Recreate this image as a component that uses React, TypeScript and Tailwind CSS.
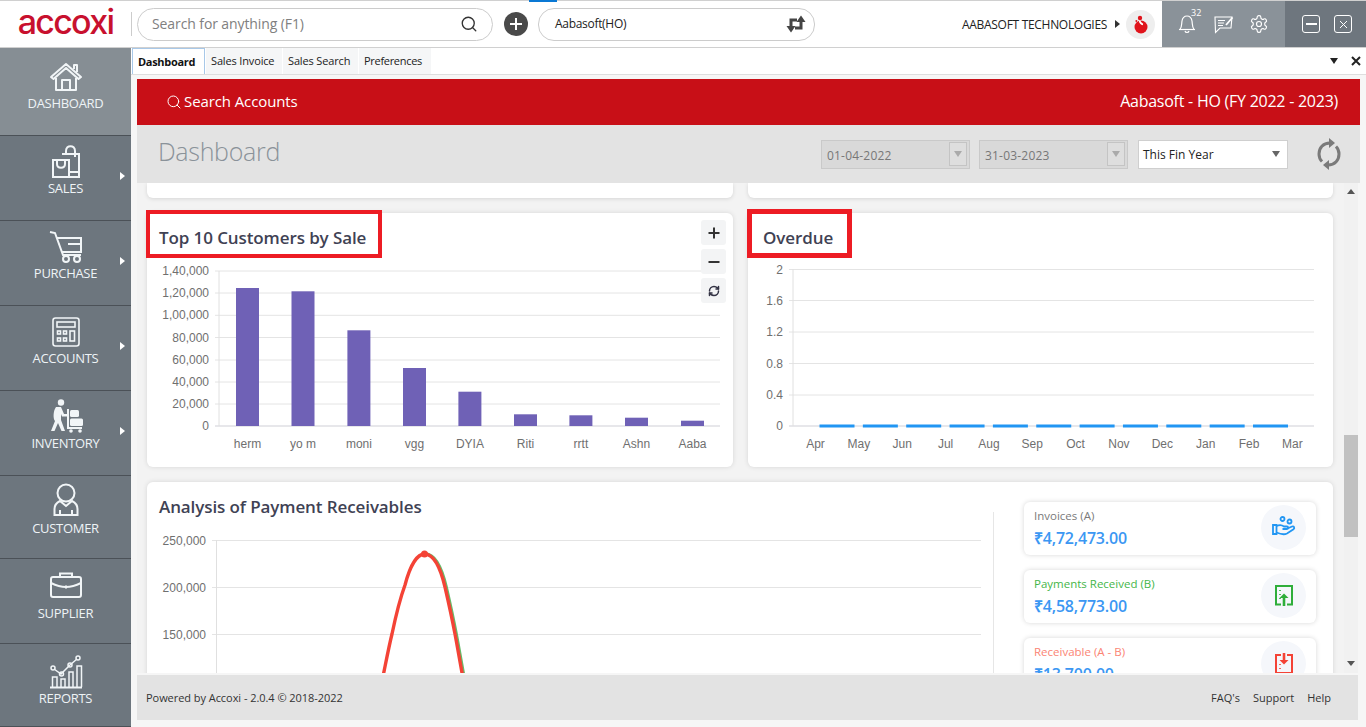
import { Search, RefreshCw } from "lucide-react";

const white = "#f1f5f7";

function HomeIcon() {
  return (
    <svg width="34" height="30" viewBox="0 0 34 30" fill="none" stroke={white} strokeWidth="2" strokeLinejoin="round">
      <path d="M2 15 L17 2 L32 15 L29.5 17 L17 6 L4.5 17 Z" />
      <path d="M25 7 V3 H28 V10" />
      <path d="M7 16 V28 H27 V16" />
      <path d="M13 28 V18 H21 V28" />
    </svg>
  );
}

function BagIcon() {
  return (
    <svg width="30" height="34" viewBox="0 0 30 34" fill="none" stroke={white} strokeWidth="2">
      <path d="M11 9 H28 V32 H18" />
      <path d="M15 9 V6 C15 -0.5 24 -0.5 24 6 V12" />
      <path d="M2 15 H18 V32 H2 Z" />
      <path d="M6 15 V19 C6 24 14 24 14 19 V15" />
      <path d="M18 27 H28" />
    </svg>
  );
}

function CartIcon() {
  return (
    <svg width="34" height="34" viewBox="0 0 34 34" fill="none" stroke={white} strokeWidth="2">
      <path d="M1 2 L6 3 L14 25 H32" />
      <path d="M8 8 H32 V22 H13" />
      <path d="M19 14 H32" />
      <circle cx="17" cy="29" r="3" />
      <circle cx="28" cy="29" r="3" />
    </svg>
  );
}

function CalcIcon() {
  return (
    <svg width="28" height="30" viewBox="0 0 28 30" fill="none" stroke={white} strokeWidth="1.6">
      <rect x="1" y="1" width="26" height="28" rx="2.5" />
      <rect x="5" y="5" width="18" height="5" />
      <rect x="5.5" y="14" width="3" height="3" />
      <rect x="11.5" y="14" width="3" height="3" />
      <rect x="5.5" y="21" width="3" height="3" />
      <rect x="11.5" y="21" width="3" height="3" />
      <rect x="18" y="14" width="4.5" height="10" />
    </svg>
  );
}

function TrolleyIcon() {
  return (
    <svg width="34" height="34" viewBox="0 0 34 34" fill={white} className="mt-[-2px]">
      <circle cx="12" cy="3.5" r="3.2" />
      <path d="M7 8 H12 L15 15 H19 V17.5 H13 L12 15 V21 L16 32 H12.5 L9 24 L5.5 32 H2 L6 22 C4 20 4 12 7 8 Z" />
      <path d="M18 10 V30 H33 V28 H20 V10 Z" />
      <rect x="21" y="11" width="9" height="7" rx="1.5" />
      <rect x="21" y="19.5" width="13" height="7.5" rx="1.5" />
      <circle cx="22" cy="32" r="1.8" />
      <circle cx="31" cy="32" r="1.8" />
    </svg>
  );
}

function UserIcon() {
  return (
    <svg width="26" height="34" viewBox="0 0 26 34" fill="none" stroke={white} strokeWidth="2" className="-mt-[4px]">
      <circle cx="13" cy="10" r="8.5" />
      <path d="M7 18 C3 20 1.5 22 1.5 26 V32 H24.5 V26 C24.5 22 23 20 19 18 L13 23 Z" />
      <path d="M7 32 V27 M19 32 V27" />
    </svg>
  );
}

function CaseIcon() {
  return (
    <svg width="34" height="28" viewBox="0 0 34 28" fill="none" stroke={white} strokeWidth="2" className="-mt-[4px]">
      <rect x="2" y="6" width="30" height="20" rx="2" />
      <path d="M11 6 V2.5 H23 V6" />
      <path d="M2 12 C10 16 14 16 17 16 C20 16 24 16 32 12" />
      <path d="M17 14.5 V17.5" />
    </svg>
  );
}

function ReportsIcon() {
  return (
    <svg width="34" height="34" viewBox="0 0 34 34" fill="none" stroke={white} strokeWidth="1.5">
      <path d="M1 32.5 H33" strokeWidth="2" />
      <path d="M3.5 32 V22 H8 V32" />
      <path d="M12 32 V24 H16 V32" />
      <path d="M20 32 V17 H24 V32" />
      <path d="M28 32 V11 H32.5 V32" />
      <path d="M5 14 L12 19 L21 10 L28 4" />
      <circle cx="4" cy="13" r="2" />
      <circle cx="12.5" cy="19" r="2" />
      <circle cx="21" cy="10" r="2" />
      <circle cx="29" cy="3" r="2" />
    </svg>
  );
}

const menu = [
  { label: "DASHBOARD", icon: <HomeIcon />, h: "h-[88px]", bg: "bg-[#868e94]", pad: "pt-[11px]" },
  { label: "SALES", icon: <BagIcon />, h: "h-[85px]", bg: "bg-[#6d767e]", pad: "pt-[8px]", sub: true },
  { label: "PURCHASE", icon: <CartIcon />, h: "h-[85px]", bg: "bg-[#6d767e]", pad: "pt-[8px]", sub: true },
  { label: "ACCOUNTS", icon: <CalcIcon />, h: "h-[85px]", bg: "bg-[#6d767e]", pad: "pt-[8px]", sub: true },
  { label: "INVENTORY", icon: <TrolleyIcon />, h: "h-[85px]", bg: "bg-[#6d767e]", pad: "pt-[8px]", sub: true },
  { label: "CUSTOMER", icon: <UserIcon />, h: "h-[83px]", bg: "bg-[#6d767e]", pad: "pt-[8px]" },
  { label: "SUPPLIER", icon: <CaseIcon />, h: "h-[85px]", bg: "bg-[#6d767e]", pad: "pt-[10px]" },
  { label: "REPORTS", icon: <ReportsIcon />, h: "h-[83px]", bg: "bg-[#6d767e]", pad: "pt-[10px]" },
];

const customers = [
  { name: "herm", x: 236, top: 288 },
  { name: "yo m", x: 291.5, top: 291.3 },
  { name: "moni", x: 347.4, top: 330.3 },
  { name: "vgg", x: 403, top: 368 },
  { name: "DYIA", x: 458.4, top: 391.7 },
  { name: "Riti", x: 514, top: 414.3 },
  { name: "rrtt", x: 569.4, top: 415.3 },
  { name: "Ashn", x: 625, top: 417.7 },
  { name: "Aaba", x: 681, top: 420.7 },
];

const saleTicks = [
  { label: "1,40,000", y: 271 },
  { label: "1,20,000", y: 293 },
  { label: "1,00,000", y: 315.3 },
  { label: "80,000", y: 337.5 },
  { label: "60,000", y: 360 },
  { label: "40,000", y: 382 },
  { label: "20,000", y: 404 },
  { label: "0", y: 426 },
];

const overdueTicks = [
  { label: "2", y: 269.5 },
  { label: "1.6", y: 300.5 },
  { label: "1.2", y: 332 },
  { label: "0.8", y: 363.5 },
  { label: "0.4", y: 395 },
  { label: "0", y: 426 },
];

const months = ["Apr", "May", "Jun", "Jul", "Aug", "Sep", "Oct", "Nov", "Dec", "Jan", "Feb", "Mar"];

function SalesChart() {
  return (
    <svg width="586" height="195" viewBox="147 262 586 195" className="block font-['Liberation_Sans',sans-serif]">
      {saleTicks.map((t) => (
        <g key={t.label}>
          <line x1="215" x2="720" y1={t.y} y2={t.y} stroke={t.label === "0" ? "#cfcfd6" : "#e4e4e4"} />
          <text x="209" y={t.y + 4} textAnchor="end" fontSize="12" fill="#6f6f6f">{t.label}</text>
        </g>
      ))}
      <line x1="219" x2="219" y1="271" y2="426" stroke="#e0e0e0" />
      {customers.map((c) => (
        <g key={c.name}>
          <rect x={c.x} y={c.top} width="23" height={426 - c.top} fill="#6f61b6" />
          <text x={c.x + 11.5} y="448" textAnchor="middle" fontSize="12" fill="#6f6f6f">{c.name}</text>
        </g>
      ))}
    </svg>
  );
}

function OverdueChart() {
  return (
    <svg width="585" height="195" viewBox="748 262 585 195" className="block font-['Liberation_Sans',sans-serif]">
      {overdueTicks.map((t) => (
        <g key={t.label}>
          <line x1="789" x2="1314" y1={t.y} y2={t.y} stroke={t.label === "0" ? "#cfcfd6" : "#e4e4e4"} />
          <text x="783" y={t.y + 4} textAnchor="end" fontSize="12" fill="#6f6f6f">{t.label}</text>
        </g>
      ))}
      <line x1="793" x2="793" y1="269" y2="426" stroke="#e0e0e0" />
      {months.slice(0, 11).map((m, i) => (
        <rect key={m} x={819.5 + i * 43.35} y="424.5" width="35" height="3" fill="#2196f3" />
      ))}
      {months.map((m, i) => (
        <text key={m} x={815.5 + i * 43.35} y="448" textAnchor="middle" fontSize="12" fill="#6f6f6f">{m}</text>
      ))}
    </svg>
  );
}

function ReceivablesChart() {
  const left = "M378 700 C 384 673 388 650 392 634 C 397 610 401 596 405 585 C 410 566 417 554 424.5 554";
  const right = "C 433 554 440 566 445 587 C 448 600 452 618 455 634 C 458 650 460 662 466 695";
  return (
    <svg width="846" height="190" viewBox="147 520 846 190" className="block font-['Liberation_Sans',sans-serif]">
      {[
        { label: "250,000", y: 540.5 },
        { label: "200,000", y: 587.5 },
        { label: "150,000", y: 634.5 },
      ].map((t) => (
        <g key={t.label}>
          <line x1="212" x2="981" y1={t.y} y2={t.y} stroke="#e4e4e4" />
          <text x="206" y={t.y + 4} textAnchor="end" fontSize="12" fill="#6f6f6f">{t.label}</text>
        </g>
      ))}
      <line x1="216.5" x2="216.5" y1="540" y2="700" stroke="#e0e0e0" />
      <path d={`M424.5 554 ${right}`} fill="none" stroke="#66bb6a" strokeWidth="3" transform="translate(1.4 0)" />
      <path d={`${left} ${right}`} fill="none" stroke="#f44336" strokeWidth="3.4" />
      <circle cx="424.5" cy="554" r="3.5" fill="#f44336" />
    </svg>
  );
}

function HandIcon() {
  return (
    <svg width="24" height="22" viewBox="0 0 24 22" fill="none" stroke="#2196f3" strokeWidth="1.8">
      <circle cx="10.5" cy="3" r="2" />
      <circle cx="17.5" cy="5.5" r="2" />
      <path d="M1 9 H4.5 V18 H1 Z" />
      <path d="M4.5 10 C8 8.5 10 9 12 10.5 H15 C16.5 10.5 16.5 13 15 13 H10.5" />
      <path d="M15.5 12.5 L20 10.5 C22 9.8 23 12 21.5 13.2 L15 17.5 C12 19 8 18 4.5 16.5" />
    </svg>
  );
}

function LedgerUpIcon() {
  return (
    <svg width="18" height="21" viewBox="0 0 18 21" fill="none" stroke="#2fae3a" strokeWidth="2">
      <path d="M6 19.5 H1 V1 H17 V19.5 H12" />
      <path d="M9 21 V11" strokeWidth="2.6" />
      <path d="M4.5 13 L9 8.5 L13.5 13 Z" fill="#2fae3a" stroke="none" />
      <path d="M5 5 V6 M5 9 V10 M5 13 V14" strokeWidth="1.6" />
    </svg>
  );
}

function LedgerDownIcon() {
  return (
    <svg width="18" height="21" viewBox="0 0 18 21" fill="none" stroke="#f44336" strokeWidth="2">
      <path d="M6 2 H1 V20 H17 V2 H12" />
      <path d="M9 0 V8" strokeWidth="2.6" />
      <path d="M4.5 7 L9 11.5 L13.5 7 Z" fill="#f44336" stroke="none" />
      <path d="M5 11 V12 M5 15 V16" strokeWidth="1.6" />
    </svg>
  );
}

const stats = [
  { label: "Invoices (A)", value: "₹4,72,473.00", color: "text-[#7a7a7a]", icon: <HandIcon /> },
  { label: "Payments Received (B)", value: "₹4,58,773.00", color: "text-[#45b649]", icon: <LedgerUpIcon /> },
  { label: "Receivable (A - B)", value: "₹13,700.00", color: "text-[#fb8474]", icon: <LedgerDownIcon /> },
];

function Triangle({ className }: { className: string }) {
  return (
    <svg width="8" height="6" viewBox="0 0 8 6" className={className}>
      <path d="M0 0 H8 L4 6 Z" fill="currentColor" />
    </svg>
  );
}

function DateBox({ value }: { value: string }) {
  return (
    <div className="flex h-[29px] w-[149px] items-center justify-between border border-[#c9c9c9] bg-[#d9d9d9] pl-[5px] pr-[2px]">
      <span className="mt-[3px] text-[12px] tracking-[0.2px] text-[#777]">{value}</span>
      <span className="flex h-[24px] w-[18px] items-center justify-center border border-[#c4c4c4] bg-[#dedede] text-[#aaa]">
        <Triangle className="" />
      </span>
    </div>
  );
}

export default function App() {
  return (
    <div className="flex h-[727px] w-[1366px] flex-col overflow-hidden bg-[#f6f6f6] font-['Open_Sans',sans-serif]">
      {/* Header */}
      <header className="relative flex h-[48px] shrink-0 items-center border-y border-[#d0d0d0] bg-white">
        <div className="absolute left-[529px] top-[-1px] h-[2px] w-[28px] bg-[#0a78d4]" />
        <div className="flex w-[131px] justify-center">
          <span className="-mt-[4px] font-['Inter',sans-serif] text-[34px] font-medium leading-none tracking-[-1.7px] text-[#c8102e]">accoxi</span>
        </div>
        <div className="h-[24px] w-px bg-[#ccc]" />
        <div className="ml-[5px] flex h-[33px] w-[356px] items-center justify-between rounded-full border border-[#ccc] pl-[14px] pr-[14px]">
          <span className="-mt-[1px] text-[14px] tracking-[-0.1px] text-[#808080]">Search for anything (F1)</span>
          <Search size={18} strokeWidth={1.8} className="text-[#333]" />
        </div>
        <div className="ml-[11px] flex h-[24px] w-[24px] items-center justify-center rounded-full bg-[#4a4a4a]">
          <svg width="14" height="14" viewBox="0 0 14 14" stroke="#fff" strokeWidth="2"><path d="M7 1 V13 M1 7 H13" /></svg>
        </div>
        <div className="ml-[10px] flex h-[33px] w-[277px] items-center justify-between rounded-[16px] border border-[#ccc] pl-[16px] pr-[8px]">
          <span className="text-[12px] tracking-[-0.3px] text-[#222]">Aabasoft(HO)</span>
          <svg width="20" height="22" viewBox="0 0 20 22" fill="none" stroke="#444" strokeWidth="3">
            <path d="M5 17 V7 H11" />
            <path d="M0.5 13 H9.5 L5 19.5 Z" fill="#444" stroke="none" />
            <path d="M15 5 V15 H9" />
            <path d="M10.5 9 H19.5 L15 2.5 Z" fill="#444" stroke="none" />
          </svg>
        </div>
        <span className="ml-[147px] mt-[2px] w-[150px] whitespace-nowrap text-[12px] tracking-[-0.3px] text-[#222]">AABASOFT TECHNOLOGIES</span>
        <svg width="5" height="8" viewBox="0 0 5 8" className="ml-[3px]"><path d="M0 0 L5 4 L0 8 Z" fill="#333" /></svg>
        <div className="ml-[6px] flex h-[29px] w-[29px] items-center justify-center rounded-full bg-[#eeeeee]">
          <svg width="14" height="20" viewBox="0 0 14 20">
            <circle cx="7" cy="13" r="6.5" fill="#e0141c" />
            <path d="M5.5 6.5 C6 9 7 10 9 10.5" fill="none" stroke="#fff" strokeWidth="1.6" />
            <circle cx="6" cy="4" r="2.2" fill="#e0141c" />
            <circle cx="2.4" cy="7" r="1" fill="#e0141c" />
          </svg>
        </div>
        <div className="ml-[7px] flex h-full w-[123px] items-center bg-[#8a9299] pl-[16px]">
          <div className="relative">
            <svg width="18" height="20" viewBox="0 0 18 20" fill="none" stroke="#fff" strokeWidth="1.2">
              <path d="M2 15.5 C4 13 3.5 10 4 7 C4.5 4 6.5 2 9 2 C11.5 2 13.5 4 14 7 C14.5 10 14 13 16 15.5 Z" />
              <path d="M1 15.5 H17" />
              <path d="M7 17 C7.5 19 10.5 19 11 17" />
            </svg>
            <span className="absolute left-[13px] top-[-8px] text-[9px] text-white">32</span>
          </div>
          <svg width="20" height="19" viewBox="0 0 20 19" fill="none" stroke="#fff" strokeWidth="1.1" className="ml-[18px]">
            <path d="M1 2 H18 L17 13 H6 L1.5 17.5 Z" />
            <path d="M4 5.5 H11 M4 8 H10 M4 10.5 H9" />
            <path d="M12 10 L18.5 2.5" strokeWidth="1.8" />
          </svg>
          <svg width="20" height="20" viewBox="0 0 24 24" fill="none" stroke="#fff" strokeWidth="1.4" className="ml-[15px]">
            <path d="M12.22 2h-.44a2 2 0 0 0-2 2v.18a2 2 0 0 1-1 1.73l-.43.25a2 2 0 0 1-2 0l-.15-.08a2 2 0 0 0-2.73.73l-.22.38a2 2 0 0 0 .73 2.73l.15.1a2 2 0 0 1 1 1.72v.51a2 2 0 0 1-1 1.74l-.15.09a2 2 0 0 0-.73 2.73l.22.38a2 2 0 0 0 2.73.73l.15-.08a2 2 0 0 1 2 0l.43.25a2 2 0 0 1 1 1.73V20a2 2 0 0 0 2 2h.44a2 2 0 0 0 2-2v-.18a2 2 0 0 1 1-1.73l.43-.25a2 2 0 0 1 2 0l.15.08a2 2 0 0 0 2.73-.73l.22-.39a2 2 0 0 0-.73-2.73l-.15-.08a2 2 0 0 1-1-1.74v-.5a2 2 0 0 1 1-1.74l.15-.09a2 2 0 0 0 .73-2.73l-.22-.38a2 2 0 0 0-2.73-.73l-.15.08a2 2 0 0 1-2 0l-.43-.25a2 2 0 0 1-1-1.73V4a2 2 0 0 0-2-2z" />
            <circle cx="12" cy="12" r="3" />
          </svg>
        </div>
        <div className="flex h-full w-[81px] items-center bg-[#6e767e] pl-[17px]">
          <div className="flex h-[18px] w-[18px] items-center justify-center rounded-[3px] border border-white">
            <div className="h-[2px] w-[11px] bg-white" />
          </div>
          <div className="ml-[14px] flex h-[18px] w-[18px] items-center justify-center rounded-[3px] border border-white">
            <svg width="9" height="9" viewBox="0 0 9 9" stroke="#fff" strokeWidth="1"><path d="M1 1 L8 8 M8 1 L1 8" /></svg>
          </div>
        </div>
      </header>

      <div className="flex min-h-0 flex-1">
        {/* Sidebar */}
        <aside className="w-[131px] shrink-0 bg-[#6d767e]">
          {menu.map((m) => (
            <div key={m.label} className={`relative flex flex-col items-center border-b border-[#4b5157] ${m.h} ${m.bg} ${m.pad}`}>
              <div className="flex h-[36px] items-center justify-center">{m.icon}</div>
              <span className="text-[13px] leading-[16px] tracking-[-0.3px] text-[#eef3f6]">{m.label}</span>
              {m.sub && (
                <svg width="5" height="8" viewBox="0 0 5 8" className="absolute left-[120px] top-[36px]"><path d="M0 0 L5 4 L0 8 Z" fill="#fff" /></svg>
              )}
            </div>
          ))}
        </aside>

        {/* Main */}
        <main className="flex min-w-0 flex-1 flex-col">
          <div className="flex h-[27px] shrink-0 items-end border-b border-[#dedede] bg-white pl-[1px]">
            <div className="flex h-[26px] w-[73px] items-center border border-b-0 border-[#a8c8e8] bg-white pl-[5px] pt-[1px] text-[11px] font-bold tracking-[-0.3px] text-[#111]">Dashboard</div>
            {[
              { t: "Sales Invoice", w: "w-[76px] pl-[5px] tracking-[-0.15px]" },
              { t: "Sales Search", w: "w-[75px] pl-[5px] tracking-[-0.15px]" },
              { t: "Preferences", w: "w-[72px] pl-[5px] tracking-[-0.3px]" },
            ].map((t) => (
              <div key={t.t} className={`ml-[1px] flex h-[26px] items-center bg-[#f5f6f7] pt-[1px] text-[11px] text-[#222] ${t.w}`}>{t.t}</div>
            ))}
            <div className="ml-auto flex h-[26px] items-center pr-[5px]">
              <Triangle className="mr-[13px] text-[#222]" />
              <svg width="10" height="10" viewBox="0 0 10 10" stroke="#222" strokeWidth="2"><path d="M1 1 L9 9 M9 1 L1 9" /></svg>
            </div>
          </div>

          <div className="ml-[6px] mr-[6px] mt-[4px] flex min-h-0 flex-1 flex-col">
            <div className="flex h-[46px] shrink-0 items-center justify-between bg-[#c80f17] pl-[29px] pr-[22px] text-white">
              <div className="flex items-center gap-[2px]">
                <Search size={16} strokeWidth={1.5} />
                <span className="-mt-[2px] text-[15px] tracking-[-0.1px]">Search Accounts</span>
              </div>
              <span className="-mt-[2px] text-[16px] tracking-[-0.25px]">Aabasoft - HO (FY 2022 - 2023)</span>
            </div>

            <div className="flex h-[58px] shrink-0 items-center bg-[#e3e3e3] pl-[21px] pr-[19px]">
              <span className="-mt-[4px] text-[25px] font-light tracking-[-0.3px] text-[#8a9299]">Dashboard</span>
              <div className="ml-auto flex items-center gap-[9px]">
                <DateBox value="01-04-2022" />
                <DateBox value="31-03-2023" />
                <div className="ml-[1px] flex h-[29px] w-[150px] items-center justify-between border border-[#cfcfcf] bg-white pl-[4px] pr-[7px]">
                  <span className="mt-[1px] text-[12px] text-[#222]">This Fin Year</span>
                  <Triangle className="text-[#666]" />
                </div>
              </div>
              <svg width="24" height="32" viewBox="0 0 24 32" fill="none" stroke="#7a7a7a" strokeWidth="3" className="ml-[29px]">
                <path d="M13 5 C6 5 2 10 2 16 C2 19 3 21.5 5 23.5" />
                <path d="M12 0 L18 5 L12 10 Z" fill="#7a7a7a" stroke="none" />
                <path d="M11 27 C18 27 22 22 22 16 C22 13 21 10.5 19 8.5" />
                <path d="M12 22 L6 27 L12 32 Z" fill="#7a7a7a" stroke="none" />
              </svg>
            </div>

            <div className="mr-[2px] flex h-[490px] shrink-0 overflow-hidden bg-[#f3f3f3]">
              <div className="min-w-0 flex-1 pl-[10px] pr-[11px]">
                <div className="grid grid-cols-[586px_585px] gap-x-[15px] gap-y-[15px]">
                  <div className="h-[15px] rounded-b-[6px] bg-white shadow-[0_1px_4px_rgba(0,0,0,0.12)]" />
                  <div className="h-[15px] rounded-b-[6px] bg-white shadow-[0_1px_4px_rgba(0,0,0,0.12)]" />

                  <section className="relative h-[254px] rounded-[6px] bg-white shadow-[0_0_5px_rgba(0,0,0,0.12)]">
                    <h2 className="h-[49px] pl-[12px] pt-[11px] text-[17px] font-semibold leading-[28px] tracking-[-0.1px] text-[#3f4254]">Top 10 Customers by Sale</h2>
                    <SalesChart />
                    <div className="absolute left-[-1px] top-[-3px] h-[48px] w-[236px] border-[4px] border-[#ed1c24]" />
                    <div className="absolute right-[7px] top-[7px] flex w-[25px] flex-col gap-[4px]">
                      <div className="flex h-[25px] items-center justify-center rounded-[3px] bg-[#f3f4f5]">
                        <svg width="12" height="12" viewBox="0 0 12 12" stroke="#333" strokeWidth="2"><path d="M6 0.5 V11.5 M0.5 6 H11.5" /></svg>
                      </div>
                      <div className="flex h-[25px] items-center justify-center rounded-[3px] bg-[#f3f4f5]">
                        <svg width="12" height="12" viewBox="0 0 12 12" stroke="#333" strokeWidth="2"><path d="M0.5 6 H11.5" /></svg>
                      </div>
                      <div className="flex h-[25px] items-center justify-center rounded-[3px] bg-[#f3f4f5]">
                        <RefreshCw size={12} strokeWidth={3} className="text-[#334]" />
                      </div>
                    </div>
                  </section>

                  <section className="relative h-[254px] rounded-[6px] bg-white shadow-[0_0_5px_rgba(0,0,0,0.12)]">
                    <h2 className="h-[49px] pl-[15px] pt-[11px] text-[17px] font-semibold leading-[28px] tracking-[-0.1px] text-[#3f4254]">Overdue</h2>
                    <OverdueChart />
                    <div className="absolute left-[-1px] top-[-4px] h-[49px] w-[105px] border-[5px] border-[#ed1c24]" />
                  </section>

                  <section className="col-span-2 flex h-[400px] rounded-[6px] bg-white shadow-[0_0_5px_rgba(0,0,0,0.12)]">
                    <div className="w-[846px] shrink-0">
                      <h2 className="h-[38px] pl-[12px] pt-[11px] text-[17px] font-semibold leading-[28px] tracking-[-0.1px] text-[#3f4254]">Analysis of Payment Receivables</h2>
                      <ReceivablesChart />
                    </div>
                    <div className="mt-[30px] w-px bg-[#e6e6e6]" />
                    <div className="ml-[30px] mt-[20px] flex w-[292px] flex-col gap-[15px]">
                      {stats.map((s) => (
                        <div key={s.label} className="flex h-[53px] items-center justify-between rounded-[6px] bg-white pl-[10px] pr-[10px] shadow-[0_0_5px_rgba(0,0,0,0.16)]">
                          <div>
                            <div className={`text-[11.5px] leading-[15px] ${s.color}`}>{s.label}</div>
                            <div className="mt-[4px] text-[16px] font-semibold leading-[22px] tracking-[-0.2px] text-[#3b97f3]">{s.value}</div>
                          </div>
                          <div className="-mt-[3px] flex h-[45px] w-[45px] items-center justify-center rounded-full bg-[#f5f7fb]">{s.icon}</div>
                        </div>
                      ))}
                    </div>
                  </section>
                </div>
              </div>

              {/* Scrollbar */}
              <div className="flex w-[14px] shrink-0 flex-col items-center bg-[#f1f1f1] pt-[6px]">
                <svg width="8" height="5" viewBox="0 0 8 5"><path d="M0 5 H8 L4 0 Z" fill="#555" /></svg>
                <div className="mt-[241px] h-[102px] w-full bg-[#c1c1c1]" />
                <svg width="8" height="5" viewBox="0 0 8 5" className="mt-[124px]"><path d="M0 0 H8 L4 5 Z" fill="#555" /></svg>
              </div>
            </div>

            <footer className="mr-[2px] mt-[2px] flex h-[45px] shrink-0 items-center justify-between bg-[#e3e3e3] pl-[9px] pr-[27px] pt-[1px] text-[11px] text-[#333]">
              <span className="tracking-[-0.05px]">Powered by Accoxi - 2.0.4 © 2018-2022</span>
              <div className="flex gap-[13px]">
                <span>FAQ's</span>
                <span>Support</span>
                <span>Help</span>
              </div>
            </footer>
          </div>
        </main>
      </div>
    </div>
  );
}
